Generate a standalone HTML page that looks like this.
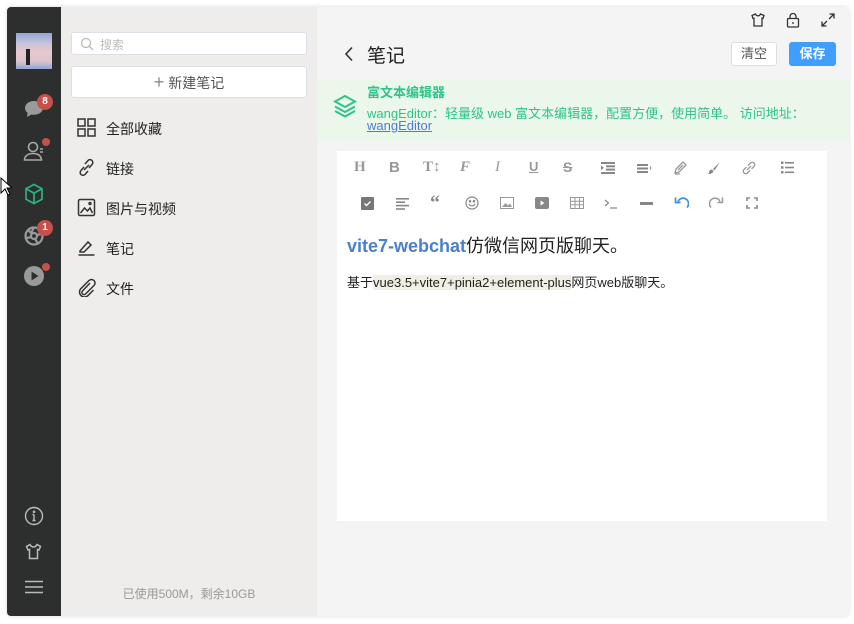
<!DOCTYPE html>
<html><head><meta charset="utf-8"><style>
*{margin:0;padding:0;box-sizing:border-box}
body{width:854px;height:624px;background:#fff;font-family:"Liberation Sans","Noto Sans CJK SC",sans-serif;position:relative;overflow:hidden}
.win{position:absolute;left:7px;top:7px;width:842px;height:609px;border-radius:4px;overflow:hidden;box-shadow:0 0 4px rgba(0,0,0,.15);background:#f4f4f4}
.side{position:absolute;left:0;top:0;width:54px;height:609px;background:#2d2f2f}
.mid{position:absolute;left:54px;top:0;width:256px;height:609px;background:#eeedeb}
.abs{position:absolute}
.badge{position:absolute;background:#c8504b;color:#fff;border-radius:50%;font-size:10px;font-weight:bold;text-align:center}
.menu{position:absolute;left:16px;font-size:14px;color:#222}
.menu svg{position:absolute;left:0;top:0}
.menu span{position:absolute;left:29px;top:1px;white-space:nowrap}
.tb svg{position:absolute}
</style></head><body>
<div class="win">
 <div class="side">
  <div class="abs" style="left:9px;top:26px;width:36px;height:36px;background:linear-gradient(#8fa6d8 0,#c9c4d8 30%,#e8c8cc 55%,#d9c3cf 80%,#8fa6d8 100%)"><div class="abs" style="left:10px;top:16px;width:4px;height:16px;background:#222"></div></div>
  <svg class="abs" style="left:17px;top:93px" width="20" height="18" viewBox="0 0 20 18"><path d="M10 1C4.5 1 1 4.3 1 8c0 2 1 3.6 2.6 4.8L3 17l4.3-2.5c.9.2 1.8.3 2.7.3 5.5 0 9-3.3 9-7S15.5 1 10 1z" fill="#9a9a9a"/></svg>
  <div class="badge" style="left:30px;top:87px;width:16px;height:16px;line-height:16px">8</div>
  <svg class="abs" style="left:16px;top:134px" width="24" height="20" viewBox="0 0 24 20" fill="none" stroke="#a8a8a8" stroke-width="1.6"><circle cx="10" cy="6" r="4.5"/><path d="M1.5 19c0-4 3.5-6.5 8.5-6.5s8 2 8.5 6.5z"/><path d="M17 8h3M17 11h3"/></svg>
  <div class="badge" style="left:35px;top:131px;width:8px;height:8px"></div>
  <svg class="abs" style="left:17px;top:176px" width="20" height="22" viewBox="0 0 20 22" fill="none" stroke="#27b57e" stroke-width="1.7"><path d="M10 1.5l8 4.3v10.4l-8 4.3-8-4.3V5.8z"/><path d="M2 5.8l8 4.3 8-4.3M10 10.1v10.4"/></svg>
  <svg class="abs" style="left:16px;top:218px" width="22" height="22" viewBox="0 0 22 22" fill="none" stroke="#9a9a9a" stroke-width="2.2"><circle cx="11" cy="11" r="8.5"/><circle cx="11" cy="11" r="3"/><path d="M11 2.5L8 8M19 9l-6 1M15 19l-3-5.5M3 13l6-1M5 5l4 4"/></svg>
  <div class="badge" style="left:30px;top:213px;width:16px;height:16px;line-height:16px">1</div>
  <svg class="abs" style="left:16px;top:258px" width="22" height="22" viewBox="0 0 22 22"><circle cx="11" cy="11" r="10" fill="#9a9a9a"/><path d="M8.5 6.5v9l7-4.5z" fill="#2d2f2f"/></svg>
  <div class="badge" style="left:35px;top:256px;width:8px;height:8px"></div>
  <svg class="abs" style="left:17px;top:499px" width="20" height="20" viewBox="0 0 20 20" fill="none" stroke="#bbb" stroke-width="1.4"><circle cx="10" cy="10" r="8.5"/><path d="M10 8.5v6M8.5 14.5h3M8.5 8.5H10"/><circle cx="10" cy="5.8" r=".6" fill="#bbb"/></svg>
  <svg class="abs" style="left:18px;top:536px" width="17" height="17" viewBox="0 0 17 17" fill="none" stroke="#bbb" stroke-width="1.5"><path d="M5 1.5L1.5 3.5 3 7l1.5-.5V15.5h8V6.5L14 7l1.5-3.5L12 1.5C11 3.5 9.5 4 8.5 4S6 3.5 5 1.5z"/></svg>
  <svg class="abs" style="left:18px;top:573px" width="18" height="14" viewBox="0 0 18 14" stroke="#bbb" stroke-width="1.6"><path d="M0 1.5h18M0 7h18M0 12.5h18"/></svg>
 </div>
 <div class="mid">
  <div class="abs" style="left:10px;top:25px;width:236px;height:23px;background:#fff;border:1px solid #dcdfe6;border-radius:3px">
   <svg class="abs" style="left:8px;top:4px" width="14" height="14" viewBox="0 0 14 14" fill="none" stroke="#bbb" stroke-width="1.3"><circle cx="6" cy="6" r="4.5"/><path d="M9.5 9.5l3.5 3.5"/></svg>
   <span class="abs" style="left:28px;top:3px;font-size:12px;color:#bbb">搜索</span></div>
  <div class="abs" style="left:10px;top:59px;width:236px;height:32px;background:#fff;border:1px solid #dcdfe6;border-radius:3px;text-align:center;line-height:30px;font-size:14px;color:#555"><span style="font-size:18px;color:#888;font-weight:300">+</span> 新建笔记</div>
  <div class="menu" style="top:111px"><svg width="19" height="19" viewBox="0 0 19 19" fill="none" stroke="#333" stroke-width="1.5"><rect x="1" y="1" width="7" height="7"/><rect x="11" y="1" width="7" height="7"/><rect x="1" y="11" width="7" height="7"/><rect x="11" y="11" width="7" height="7"/></svg><span>全部收藏</span></div>
  <div class="menu" style="top:151px"><svg width="19" height="19" viewBox="0 0 19 19" fill="none" stroke="#333" stroke-width="1.5"><path d="M8 6l3-3.5a2.5 2.5 0 014 4L12 10M11 13l-3 3.5a2.5 2.5 0 01-4-4L7 9M7 12l5-5"/></svg><span>链接</span></div>
  <div class="menu" style="top:191px"><svg width="19" height="19" viewBox="0 0 19 19" fill="none" stroke="#333" stroke-width="1.5"><rect x="1.5" y="1.5" width="16" height="16" rx="1.5"/><path d="M3.5 15l4-5 3 3 2.5-3 2.5 5"/><circle cx="13" cy="5.5" r="1"/></svg><span>图片与视频</span></div>
  <div class="menu" style="top:231px"><svg width="19" height="19" viewBox="0 0 19 19" fill="none" stroke="#333" stroke-width="1.5"><path d="M3 13l8-9 3 3-7 7H3zM1.5 17h16"/></svg><span>笔记</span></div>
  <div class="menu" style="top:271px"><svg width="19" height="19" viewBox="0 0 19 19" fill="none" stroke="#333" stroke-width="1.5"><path d="M13 5l-7.5 8a2 2 0 003 3L17 7.5a3.5 3.5 0 00-5-5L3.5 11a5 5 0 007 7l6-6"/></svg><span>文件</span></div>
  <div class="abs" style="left:0;width:256px;top:578px;text-align:center;font-size:12px;color:#999">已使用500M，剩余10GB</div>
 </div>
 <svg class="abs" style="left:744px;top:6px" width="14" height="14" viewBox="0 0 14 14" fill="none" stroke="#333" stroke-width="1.3"><path d="M4.5 1L1 2.5 2 5.5l1-.3V13h8V5.2l1 .3 1-3L9.5 1C9 2.3 8 2.8 7 2.8S5 2.3 4.5 1z"/></svg>
 <svg class="abs" style="left:779px;top:5px" width="14" height="16" viewBox="0 0 14 16" fill="none" stroke="#333" stroke-width="1.3"><rect x="1.5" y="6.5" width="11" height="8.5" rx="1"/><path d="M4 6.5V4.5a3 3 0 016 0v2M7 10v2"/></svg>
 <svg class="abs" style="left:814px;top:6px" width="14" height="14" viewBox="0 0 14 14" fill="none" stroke="#333" stroke-width="1.3"><path d="M8.5 1h4.5v4.5M13 1L8 6M5.5 13H1V8.5M1 13l5-5"/></svg>
 <svg class="abs" style="left:337px;top:39px" width="10" height="16" viewBox="0 0 10 16" fill="none" stroke="#333" stroke-width="1.6"><path d="M8 1.5L2 8l6 6.5"/></svg>
 <div class="abs" style="left:360px;top:34px;font-size:19px;color:#222">笔记</div>
 <div class="abs" style="left:724px;top:35px;width:46px;height:24px;background:#fff;border:1px solid #dcdfe6;border-radius:3px;font-size:13px;color:#555;text-align:center;line-height:22px">清空</div>
 <div class="abs" style="left:782px;top:35px;width:47px;height:24px;background:#409eff;border-radius:3px;font-size:13px;color:#fff;text-align:center;line-height:24px;font-weight:bold">保存</div>
 <div class="abs" style="left:310px;top:73px;width:532px;height:61px;background:#ebf7eb"></div>
 <svg class="abs" style="left:326px;top:87px" width="24" height="24" viewBox="0 0 24 24" fill="none" stroke="#2ec486" stroke-width="2"><path d="M12 2L2 7.5 12 13l10-5.5zM2 12.5L12 18l10-5.5M2 17l10 5.5L22 17"/></svg>
 <div class="abs" style="left:360px;top:75px;font-size:13px;font-weight:bold;color:#2ec486">富文本编辑器</div>
 <div class="abs" style="left:360px;top:96px;font-size:13px;color:#2ec486;white-space:nowrap">wangEditor：轻量级 web 富文本编辑器，配置方便，使用简单。 访问地址：</div>
 <div class="abs" style="left:360px;top:111px;font-size:13px;color:#4b7cd6;text-decoration:underline">wangEditor</div>
 <div class="abs tb" style="left:330px;top:144px;width:490px;height:370px;background:#fff">
  <div class="abs" style="left:9px;top:8px;font-family:'Liberation Serif',serif;font-size:15px;color:#999;font-weight:bold;white-space:nowrap">
   <span class="abs" style="left:8px">H</span><span class="abs" style="left:43px;font-family:'Liberation Sans'">B</span><span class="abs" style="left:77px">T↕</span><span class="abs" style="left:114px;font-style:italic">F</span><span class="abs" style="left:149px;font-style:italic;font-weight:normal">I</span><span class="abs" style="left:183px;text-decoration:underline;font-family:'Liberation Sans';font-size:13px">U</span><span class="abs" style="left:217px;text-decoration:line-through;font-family:'Liberation Sans';font-size:14px">S</span></div>
  <svg style="left:264px;top:11px" width="14" height="12" viewBox="0 0 14 12" fill="#888"><rect x="0" y="0" width="14" height="2"/><rect x="5" y="3.3" width="9" height="2"/><rect x="5" y="6.6" width="9" height="2"/><rect x="0" y="10" width="14" height="2"/><path d="M0 3.5l3 2.3-3 2.3z"/></svg>
  <svg style="left:300px;top:11px" width="16" height="12" viewBox="0 0 16 12" fill="#888"><rect x="0" y="2" width="11" height="2"/><rect x="0" y="5.5" width="11" height="2"/><rect x="0" y="9" width="11" height="2"/><path d="M13 4l1.5 2-1.5 2z"/></svg>
  <svg style="left:336px;top:10px" width="14" height="14" viewBox="0 0 14 14" fill="none" stroke="#999" stroke-width="1.3"><path d="M2 12l1-4 7-7 3 3-7 7zM5 9l5-5M2 13h5"/></svg>
  <svg style="left:370px;top:10px" width="14" height="14" viewBox="0 0 14 14"><path d="M13 1L6 8l1.5 1.5z" fill="#888"/><path d="M5 8.5c-2 0-3 1.5-3 3L1 13c3 0 5-1 5.5-3z" fill="#888"/></svg>
  <svg style="left:405px;top:10px" width="14" height="14" viewBox="0 0 14 14" fill="none" stroke="#999" stroke-width="1.3"><path d="M6 4.5l2.5-2.5a2.3 2.3 0 013.5 3.5L9.5 8M8 9.5L5.5 12A2.3 2.3 0 012 8.5L4.5 6M5 9l4-4"/></svg>
  <svg style="left:444px;top:10px" width="13" height="13" viewBox="0 0 13 13" fill="#888"><rect x="0" y="0.5" width="2.5" height="2.5"/><rect x="4" y="1" width="9" height="1.6"/><rect x="0" y="5.2" width="2.5" height="2.5"/><rect x="4" y="5.7" width="9" height="1.6"/><rect x="0" y="10" width="2.5" height="2.5"/><rect x="4" y="10.5" width="9" height="1.6"/></svg>
  <svg style="left:24px;top:46px" width="13" height="13" viewBox="0 0 13 13"><rect width="13" height="13" rx="1" fill="#777"/><path d="M3.5 6.5l2 2 4-4" stroke="#fff" stroke-width="1.4" fill="none"/></svg>
  <svg style="left:59px;top:47px" width="13" height="12" viewBox="0 0 13 12" fill="#888"><rect y="0" width="13" height="1.6"/><rect y="3.4" width="9" height="1.6"/><rect y="6.8" width="13" height="1.6"/><rect y="10.2" width="9" height="1.6"/></svg>
  <div class="abs" style="left:93px;top:41px;font-size:20px;font-weight:bold;color:#888;font-family:'Liberation Serif',serif">“</div>
  <svg style="left:128px;top:45px" width="14" height="14" viewBox="0 0 14 14" fill="none" stroke="#888" stroke-width="1.2"><circle cx="7" cy="7" r="6"/><path d="M4 8c1.5 2.5 4.5 2.5 6 0"/><circle cx="5" cy="5.3" r=".7" fill="#888"/><circle cx="9" cy="5.3" r=".7" fill="#888"/></svg>
  <svg style="left:163px;top:46px" width="14" height="12" viewBox="0 0 14 12"><rect x=".5" y=".5" width="13" height="11" fill="none" stroke="#999"/><path d="M2 10l3.5-4 2.5 2.5 2-2 2 3.5z" fill="#999"/></svg>
  <svg style="left:198px;top:46px" width="14" height="12" viewBox="0 0 14 12"><rect width="14" height="12" rx="2" fill="#888"/><path d="M5.5 3.5v5l4-2.5z" fill="#fff"/></svg>
  <svg style="left:233px;top:46px" width="14" height="12" viewBox="0 0 14 12" fill="none" stroke="#999"><rect x=".5" y=".5" width="13" height="11"/><path d="M.5 4.2h13M.5 7.8h13M5 .5v11M9.5 .5v11"/></svg>
  <svg style="left:267px;top:48px" width="14" height="10" viewBox="0 0 14 10" fill="none" stroke="#888" stroke-width="1.2"><path d="M1 1l3.5 3L1 7M6 9h7"/></svg>
  <div class="abs" style="left:303px;top:51px;width:13px;height:3px;background:#888"></div>
  <svg style="left:337px;top:45px" width="15" height="14" viewBox="0 0 15 14" fill="none" stroke="#3a8ee6" stroke-width="1.7"><path d="M4 5.5a5.5 5.5 0 119 6M1.5 1.5v5h5"/></svg>
  <svg style="left:372px;top:45px" width="15" height="14" viewBox="0 0 15 14" fill="none" stroke="#999" stroke-width="1.5"><path d="M11 5.5a5.5 5.5 0 10-9 6M13.5 1.5v5h-5"/></svg>
  <svg style="left:409px;top:46px" width="12" height="12" viewBox="0 0 12 12" fill="none" stroke="#888" stroke-width="1.6"><path d="M1 4V1h3M8 1h3v3M11 8v3H8M4 11H1V8"/></svg>
  <div class="abs" style="left:10px;top:81px;font-size:18px;white-space:nowrap;color:#222"><b style="color:#4a7fcd">vite7-webchat</b>仿微信网页版聊天。</div>
  <div class="abs" style="left:10px;top:121px;font-size:13px;white-space:nowrap;color:#222">基于<span style="background:#f1eee6">vue3.5+vite7+pinia2+element-plus</span>网页web版聊天。</div>
 </div>
</div>
<svg class="abs" style="left:0;top:177px" width="12" height="20" viewBox="0 0 12 20"><path d="M1 1v15l4-4 3 6 2-1-3-6h5z" fill="#fff" stroke="#000"/></svg>
</body></html>
